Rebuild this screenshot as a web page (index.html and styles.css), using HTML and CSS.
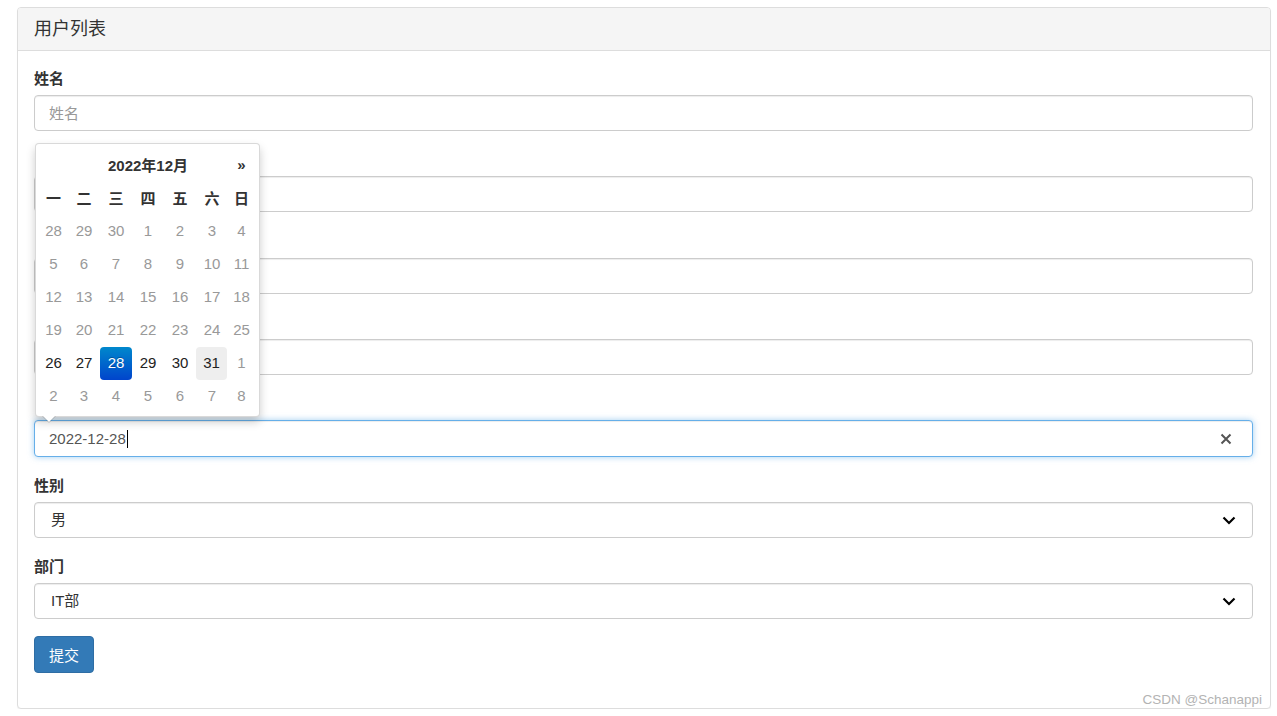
FILE: index.html
```html
<!DOCTYPE html>
<html lang="zh-CN">
<head>
<meta charset="utf-8">
<title>用户列表</title>
<link rel="stylesheet" href="styles.css">
</head>
<body>
<div class="page">
  <div class="panel">
    <div class="panel-heading">用户列表</div>
    <div class="panel-body">
      <form class="form">
        <div class="form-group">
          <label class="label">姓名</label>
          <input class="form-control" type="text" placeholder="姓名">
        </div>
        <div class="form-group">
          <label class="label covered">密码</label>
          <input class="form-control" type="password">
        </div>
        <div class="form-group">
          <label class="label covered">年龄</label>
          <input class="form-control" type="text">
        </div>
        <div class="form-group">
          <label class="label covered">账户余额</label>
          <input class="form-control" type="text">
        </div>
        <div class="form-group">
          <label class="label covered">入职时间</label>
          <div class="form-control focus" role="textbox"><span class="val">2022-12-28</span><span class="caret"></span>
            <svg class="clear" width="12" height="12" viewBox="0 0 12 12"><path d="M1.5 1.5 L10.5 10.5 M10.5 1.5 L1.5 10.5" stroke="#555" stroke-width="2" fill="none"/></svg>
          </div>
        </div>
        <div class="form-group">
          <label class="label">性别</label>
          <div class="select-wrap">
            <select class="form-control select"><option>男</option><option>女</option></select>
            <svg class="chev" width="14" height="9" viewBox="0 0 14 9"><path d="M1.5 1.5 L7 7 L12.5 1.5" stroke="#000" stroke-width="2.2" fill="none"/></svg>
          </div>
        </div>
        <div class="form-group">
          <label class="label">部门</label>
          <div class="select-wrap">
            <select class="form-control select"><option>IT部</option></select>
            <svg class="chev" width="14" height="9" viewBox="0 0 14 9"><path d="M1.5 1.5 L7 7 L12.5 1.5" stroke="#000" stroke-width="2.2" fill="none"/></svg>
          </div>
        </div>
        <button class="btn" type="button">提交</button>
      </form>

      <div class="datepicker">
        <table class="dp-table">
          <thead>
            <tr class="dp-head">
              <th class="c1 prev">«</th>
              <th colspan="5" class="switch">2022年12月</th>
              <th class="c7 next">»</th>
            </tr>
            <tr class="dow">
              <th class="c1">一</th><th class="c2">二</th><th class="c3">三</th><th class="c4">四</th><th class="c5">五</th><th class="c6">六</th><th class="c7">日</th>
            </tr>
          </thead>
          <tbody>
            <tr><td class="g">28</td><td class="g">29</td><td class="g">30</td><td class="g">1</td><td class="g">2</td><td class="g">3</td><td class="g">4</td></tr>
            <tr><td class="g">5</td><td class="g">6</td><td class="g">7</td><td class="g">8</td><td class="g">9</td><td class="g">10</td><td class="g">11</td></tr>
            <tr><td class="g">12</td><td class="g">13</td><td class="g">14</td><td class="g">15</td><td class="g">16</td><td class="g">17</td><td class="g">18</td></tr>
            <tr><td class="g">19</td><td class="g">20</td><td class="g">21</td><td class="g">22</td><td class="g">23</td><td class="g">24</td><td class="g">25</td></tr>
            <tr><td>26</td><td>27</td><td><span class="day active">28</span></td><td>29</td><td>30</td><td><span class="day hover">31</span></td><td class="g">1</td></tr>
            <tr><td class="g">2</td><td class="g">3</td><td class="g">4</td><td class="g">5</td><td class="g">6</td><td class="g">7</td><td class="g">8</td></tr>
          </tbody>
        </table>
      </div>
    </div>
    <div class="watermark">CSDN @Schanappi</div>
  </div>
</div>
</body>
</html>
```

FILE: styles.css
```css
* { box-sizing: border-box; }
html, body { margin: 0; padding: 0; background: #fff; }
body {
  font-family: "Liberation Sans", "Noto Sans CJK SC", sans-serif;
  font-size: 15px;
  color: #333;
}
.page { padding: 7px 6px 0 17px; }
.panel {
  position: relative;
  width: 1254px;
  height: 702px;
  border: 1px solid #ddd;
  border-radius: 4px;
  box-shadow: 0 1px 1px rgba(0,0,0,.05);
  background: #fff;
}
.panel-heading {
  height: 43px;
  padding: 10px 16px;
  line-height: 22px;
  font-size: 18px;
  color: #333;
  background: #f5f5f5;
  border-bottom: 1px solid #ddd;
  border-radius: 3px 3px 0 0;
}
.panel-body {
  position: relative;
  padding: 16px 17px 16px 16px;
}
.form { display: flex; flex-direction: column; align-items: flex-start; }
.form-group { width: 100%; margin-bottom: 17.33px; }
.label {
  display: block;
  font-weight: 700;
  font-size: 15px;
  line-height: 21px;
  margin-bottom: 7px;
  padding-top: 1px;
  height: 21px;
  color: #333;
}
.covered { visibility: hidden; }
.form-control {
  display: block;
  width: 100%;
  height: 36px;
  padding: 0 14px;
  font-family: "Liberation Sans", "Noto Sans CJK SC", sans-serif;
  font-size: 15px;
  color: #555;
  background: #fff;
  border: 1px solid #ccc;
  border-radius: 4px;
  box-shadow: inset 0 1px 1px rgba(0,0,0,.075);
  outline: none;
}
.form-control::placeholder { color: #999; }
.focus {
  position: relative;
  display: flex;
  align-items: center;
  border-color: #66afe9;
  box-shadow: inset 0 1px 1px rgba(0,0,0,.075), 0 0 6px rgba(102,175,233,.6);
  height: 37px;
  margin-bottom: -1px;
}
.val { color: #555; }
.caret { display: inline-block; width: 1px; height: 18px; background: #000; margin-left: 1px; }
.clear { position: absolute; right: 20px; top: 12px; }
.select-wrap { position: relative; }
.select {
  appearance: none;
  -webkit-appearance: none;
  padding-left: 16px;
  color: #333;
}
.chev { position: absolute; right: 17px; top: 14px; pointer-events: none; }
.btn {
  height: 37px;
  padding: 0 14px;
  font-family: "Liberation Sans", "Noto Sans CJK SC", sans-serif;
  font-size: 15px;
  color: #fff;
  background: #337ab7;
  border: 1px solid #2e6da4;
  border-radius: 4px;
}

/* datepicker */
.datepicker {
  position: absolute;
  left: 17px;
  top: 92px;
  width: 225px;
  padding: 5px 4px 3px 3px;
  background: #fff;
  border: 1px solid rgba(0,0,0,.15);
  border-radius: 4px;
  box-shadow: 0 5px 10px rgba(0,0,0,.2);
}
.datepicker::before {
  content: "";
  position: absolute;
  left: 6px;
  bottom: -7px;
  border-left: 7px solid transparent;
  border-right: 7px solid transparent;
  border-top: 7px solid rgba(0,0,0,.15);
}
.datepicker::after {
  content: "";
  position: absolute;
  left: 7px;
  bottom: -6px;
  border-left: 6px solid transparent;
  border-right: 6px solid transparent;
  border-top: 6px solid #fff;
}
.dp-table { border-collapse: separate; border-spacing: 0; table-layout: fixed; width: 216px; }
.dp-table th, .dp-table td {
  height: 33px;
  padding: 0 0 2px 0;
  text-align: center;
  font-size: 15px;
}
.dp-table th { font-weight: 700; color: #333; }
.c1 { width: 29px; } .c2 { width: 32px; } .c3 { width: 32px; } .c4 { width: 32px; }
.c5 { width: 32px; } .c6 { width: 32px; } .c7 { width: 27px; }
.prev { visibility: hidden; }
.next { font-size: 16px; }
.dp-table td { color: #222; }
.dp-table td.g { color: #999; }
.dp-table td:has(.day) { padding: 0; }
.day {
  display: flex;
  align-items: center;
  justify-content: center;
  width: 32px;
  height: 33px;
  padding-bottom: 2px;
  border-radius: 4px;
}
.active {
  color: #fff;
  background: linear-gradient(to bottom, #08c, #04c);
  text-shadow: 0 -1px 0 rgba(0,0,0,.25);
}
.hover { width: 31px; background: #eee; color: #222; }

.watermark {
  position: absolute;
  right: 8px;
  bottom: 1px;
  font-size: 13.5px;
  color: #b3b3b3;
  white-space: nowrap;
}
```
